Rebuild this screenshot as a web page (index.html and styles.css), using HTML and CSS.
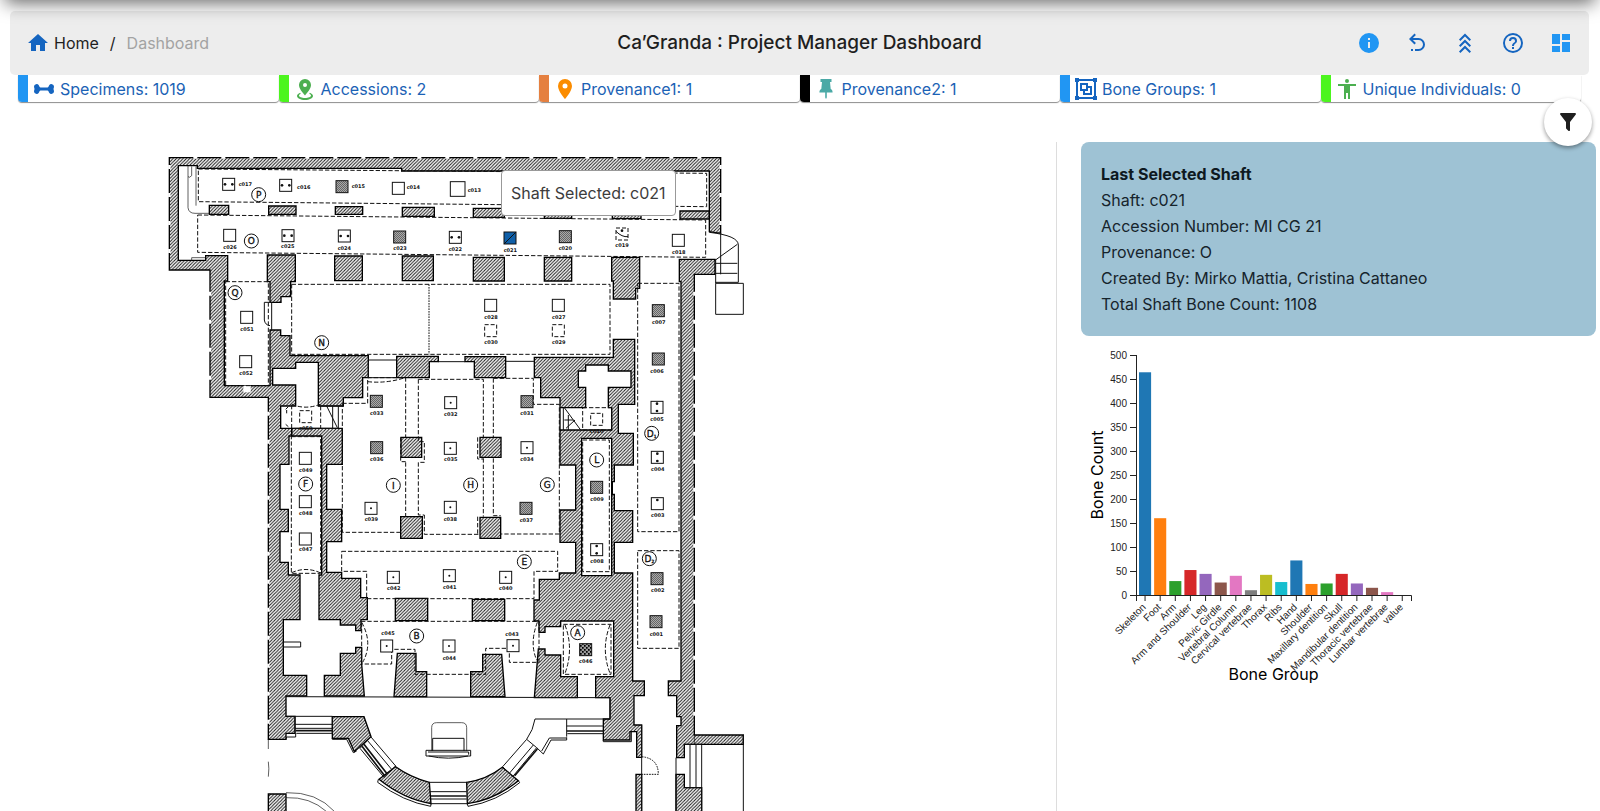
FILE: index.html
```html
<!DOCTYPE html>
<html lang="en">
<head>
<meta charset="utf-8">
<title>Ca’Granda : Project Manager Dashboard</title>
<link rel="stylesheet" href="styles.css">
</head>
<body>
<div class="appbar-edge"></div>
<header class="header">
  <nav class="crumbs" aria-label="Breadcrumb">
    <a class="crumb-home" href="#home">
      <svg class="icon" viewBox="0 0 24 24"><path d="M10,20V14H14V20H19V12H22L12,3L2,12H5V20H10Z"/></svg>
      <span>Home</span>
    </a>
    <span class="crumb-sep">/</span>
    <span class="crumb-current">Dashboard</span>
  </nav>
  <h1 class="title">Ca’Granda : Project Manager Dashboard</h1>
  <div class="actions">
    <button class="action light" type="button" aria-label="Information"><svg class="icon" viewBox="0 0 24 24"><path d="M13,9H11V7H13M13,17H11V11H13M12,2A10,10 0 0,0 2,12A10,10 0 0,0 12,22A10,10 0 0,0 22,12A10,10 0 0,0 12,2Z"/></svg></button>
    <button class="action" type="button" aria-label="Undo"><svg class="icon" viewBox="0 0 24 24"><path d="M13.5,7A6.5,6.5 0 0,1 20,13.5A6.5,6.5 0 0,1 13.5,20H10V18H13.5C16,18 18,16 18,13.5C18,11 16,9 13.5,9H7.83L10.91,12.09L9.5,13.5L4,8L9.5,2.5L10.92,3.91L7.83,7H13.5M6,18H8V20H6V18Z"/></svg></button>
    <button class="action" type="button" aria-label="Collapse"><svg class="icon line" viewBox="0 0 24 24"><path d="M6.700,9.300L12,4L17.300,9.300M6.700,15.300L12,10L17.300,15.300M6.700,21.300L12,16L17.300,21.300"/></svg></button>
    <button class="action" type="button" aria-label="Help"><svg class="icon" viewBox="0 0 24 24"><path d="M11,18H13V16H11V18M12,2A10,10 0 0,0 2,12A10,10 0 0,0 12,22A10,10 0 0,0 22,12A10,10 0 0,0 12,2M12,20C7.59,20 4,16.41 4,12C4,7.59 7.59,4 12,4C16.41,4 20,7.59 20,12C20,16.41 16.41,20 12,20M12,6A4,4 0 0,0 8,10H10A2,2 0 0,1 12,8A2,2 0 0,1 14,10C14,12 11,11.75 11,15H13C13,12.75 16,12.5 16,10A4,4 0 0,0 12,6Z"/></svg></button>
    <button class="action light" type="button" aria-label="Dashboard layout"><svg class="icon" viewBox="0 0 24 24"><path d="M13,3V9H21V3M13,21H21V11H13M3,21H11V15H3M3,13H11V3H3V13Z"/></svg></button>
  </div>
</header>

<section class="stats" aria-label="Project totals">
  <a class="stat blue" href="#specimens">
    <svg class="icon navy" viewBox="0 0 24 24"><path d="M2,9.500A2.600,2.600 0 0,1 6.800,8.300C7.300,9.200 7.700,10.400 8.500,10.400H15.500C16.300,10.400 16.700,9.200 17.200,8.300A2.600,2.600 0 0,1 22,9.500C22,10.800 21.500,11.200 21.500,12C21.500,12.800 22,13.200 22,14.500A2.600,2.600 0 0,1 17.200,15.700C16.700,14.800 16.300,13.600 15.500,13.600H8.500C7.700,13.600 7.300,14.800 6.800,15.700A2.600,2.600 0 0,1 2,14.500C2,13.200 2.500,12.800 2.500,12C2.500,11.200 2,10.800 2,9.500Z"/></svg>
    <span>Specimens: 1019</span>
  </a>
  <a class="stat green" href="#accessions">
    <svg class="icon leaf" viewBox="0 0 24 24"><path d="M12,2A6,6 0 0,1 18,8C18,11.500 14.500,15.500 12,18.500C9.500,15.500 6,11.500 6,8A6,6 0 0,1 12,2M12,6A2,2 0 0,0 10,8A2,2 0 0,0 12,10A2,2 0 0,0 14,8A2,2 0 0,0 12,6M20,19C20,21.200 16.400,23 12,23C7.600,23 4,21.200 4,19C4,17.700 5.200,16.600 7.100,15.800L7.700,16.700C6.700,17.200 6,17.800 6,18.500C6,19.900 8.700,21 12,21C15.300,21 18,19.900 18,18.500C18,17.800 17.300,17.200 16.300,16.700L16.900,15.800C18.800,16.600 20,17.700 20,19Z"/></svg>
    <span>Accessions: 2</span>
  </a>
  <a class="stat rust" href="#provenance1">
    <svg class="icon amber" viewBox="0 0 24 24"><path d="M12,11.500A2.500,2.500 0 0,1 9.500,9A2.500,2.500 0 0,1 12,6.500A2.500,2.500 0 0,1 14.500,9A2.500,2.500 0 0,1 12,11.500M12,2A7,7 0 0,0 5,9C5,14.250 12,22 12,22C12,22 19,14.250 19,9A7,7 0 0,0 12,2Z"/></svg>
    <span>Provenance1: 1</span>
  </a>
  <a class="stat black" href="#provenance2">
    <svg class="icon teal" viewBox="0 0 24 24"><path d="M16,5L16.700,12C18,12.700 18.600,13.700 18.600,15.500H12.800V20.500L12,22L11.200,20.500V15.500H5.400C5.400,13.700 6,12.700 7.300,12L8,5H6.500V2H17.500V5Z"/></svg>
    <span>Provenance2: 1</span>
  </a>
  <a class="stat blue" href="#groups">
    <svg class="icon navy" viewBox="0 0 24 24"><path fill-rule="evenodd" d="M1,1H5V2H19V1H23V5H22V19H23V23H19V22H5V23H1V19H2V5H1ZM5,4V5H4V19H5V20H19V19H20V5H19V4ZM6,6H14V9H18V18H9V14H6ZM8,8V12H12V8ZM14,11V14H11V16H16V11Z"/></svg>
    <span>Bone Groups: 1</span>
  </a>
  <a class="stat green" href="#individuals">
    <svg class="icon leaf" viewBox="0 0 24 24"><path d="M12,2A2,2 0 0,1 14,4A2,2 0 0,1 12,6A2,2 0 0,1 10,4A2,2 0 0,1 12,2M21,7V9H15V22H13V16H11V22H9V9H3V7Z"/></svg>
    <span>Unique Individuals: 0</span>
  </a>
</section>

<button class="fab" type="button" aria-label="Filter"><svg class="icon" viewBox="0 0 24 24"><path d="M14,12V19.880C14.040,20.180 13.940,20.500 13.710,20.710C13.320,21.100 12.690,21.100 12.300,20.710L10.290,18.700C10.060,18.470 9.960,18.160 10,17.870V12H9.970L4.210,4.620C3.870,4.190 3.950,3.560 4.380,3.220C4.570,3.080 4.780,3 5,3H19C19.220,3 19.430,3.080 19.620,3.220C20.050,3.560 20.130,4.190 19.790,4.620L14.030,12H14Z"/></svg></button>

<main class="content">
  <section class="map" aria-label="Crypt floor plan">
    <div class="plan-wrap">
    <svg class="plan" viewBox="0 0 1800 1998">
      <defs>
        <pattern id="hatch" width="10" height="10" patternUnits="userSpaceOnUse"><path class="hatch-line" d="M-2,2L2,-2M-1,11L11,-1M8,12L12,8"/></pattern>
        <pattern id="mesh" width="6" height="6" patternUnits="userSpaceOnUse"><rect class="mesh-base" width="6" height="6"/><path class="mesh-line" d="M0,6L6,0"/></pattern>
        <pattern id="checker" width="12" height="12" patternUnits="userSpaceOnUse"><rect class="check-base" width="12" height="12"/><path class="check-dot" d="M0,0H5V5H0ZM6,6H11V11H6Z"/></pattern>
      </defs>

      <g class="wall">
        <path d="M28,38H1682V265L1648,260V78H725V70H112V62H55V346H137V332H203V408H193V722H330V555H362V572H390V632H625V698H608V758H550V783H475V652H407V670H338V720H407V783H362V850H395V873H387V958H360V1093H385V1160H360V1252H385V1290H420V1424H370V1591H440V1653H378V1714H405V1765H378V1783H325V757H150V375H28Z"/>
        <path d="M322,330H406V410H392V455H363V472H330V410H322Z"/>
        <path d="M395,850H547V958H500V1093H545V1190H500V1282H545V1300H602V1358H622V1424H603V1457H587V1440H541V1424H477V1290H485V873H395Z"/>
        <path d="M541,1525V1591H493V1653H613L605,1557V1507H587V1525Z"/>
        <path d="M148,181H206V208H148ZM326,183H408V208H326ZM526,185H608V208H526ZM727,187H823V214H727ZM940,190H1033V217H940ZM1153,192H1235V220H1153ZM1357,194H1443V221H1357ZM1560,198H1648V222H1560Z"/>
        <path d="M524,333H607V407H524ZM727,333H820V407H727ZM940,337H1033V408H940ZM1153,337H1235V408H1153Z"/>
        <path d="M1355,337H1439V430H1427V462H1360V408H1355Z"/>
        <path d="M1558,343H1665V388H1603V1770H1750V1798H1573V1838H1550V1742H1563V1715H1550V1652H1525V1608H1563V410H1558Z"/>
        <path d="M1548,1888H1573V1928H1625V2010H1548Z"/>
        <path d="M710,634H835V650H808V698H710ZM915,635H1037V698H943V650H915Z"/>
        <path fill-rule="evenodd" d="M1123,637H1360V583H1424V778H1375V865H1420V960H1363V1010H1357V1048H1363V1097H1418V1192H1363V1284H1418V1608H1453V1652H1422V1740H1445V1837H1430V1760H1410V1785H1330V1722H1350V1658H1307V1595H1361V1428H1202V1445H1155V1462H1137V1428H1122V1365H1138V1303H1198V1284H1247V1192H1200V1095H1247V960H1200V758H1142V698H1123ZM1265,880V1292H1355V880ZM1277,660H1345V678H1413V727H1345V788H1355V855H1200V788H1277V727H1255V678H1277Z"/>
        <path d="M1202,1595V1530H1155V1512H1135L1123,1658H1252V1595Z"/>
        <path d="M723,877H785V937H723ZM960,877H1023V937H960ZM722,1115H787V1180H722ZM960,1117H1022V1180H960Z"/>
        <path d="M706,1360H803V1427H706ZM937,1363H1034V1427H937Z"/>
        <path d="M712,1525L702,1655H800V1580H768V1525ZM968,1528V1580H932V1655H1035L1025,1528Z"/>
        <path d="M517,1715H612L633,1775L583,1820L565,1780H517Z"/>
        <path d="M707,1865Q750,1896 808,1912L813,1976Q730,1962 657,1903ZM920,1912Q980,1904 1027,1867L1075,1907Q1004,1965 922,1976Z"/>
        <path d="M325,1947H378V2010H325ZM1428,1888H1445V2010H1428Z"/>
      </g>
      <g class="breaks">
        <path d="M100,38H1660M28,60V370M150,440V740M325,800V1760M1603,440V1760M1682,60V250"/>
      </g>

      <g class="outline">
        <path d="M378,1655L1350,1658M378,1714H517M1350,1658V1722H1125"/>
        <path d="M405,1714V1765M517,1714V1765M405,1738H517M405,1750H517M378,1783L380,1776H407V1765"/>
        <path class="bold" d="M407,1757H517M1220,1758H1332"/>
        <path d="M1220,1722V1775M1220,1743H1332M1222,1766H1332M409,1765H517M517,1780V1783H560L580,1823L590,1818"/>
        <path d="M633,1776L707,1863L672,1897L600,1810ZM622,1786L694,1872"/>
        <path class="bold" d="M612,1798L680,1885M606,1804L674,1892"/>
        <path d="M1125,1722Q1120,1755 1100,1783L1130,1808L1058,1895L1028,1865L1100,1783M1120,1800L1048,1885"/>
        <path class="bold" d="M1132,1812L1064,1892"/>
        <path d="M1130,1808L1150,1827L1173,1785H1220V1777M1145,1818L1168,1779H1220M1330,1785V1790H1414V1760"/>
        <path d="M808,1912H920M808,1940H920M812,1962H920M813,1976H922"/>
        <path class="bold" d="M812,1953H920"/>
        <path d="M655,1903L653,1912Q730,1970 812,1984L813,1976M922,1976L924,1984Q1010,1970 1079,1913L1075,1907"/>
        <path class="thin" d="M815,1818V1748Q815,1733 830,1733H905Q920,1733 920,1748V1818"/>
        <path d="M818,1818V1780H912V1818M798,1816H932V1833H798ZM804,1821H926V1829M806,1833Q865,1846 924,1833"/>
        <path class="thin" d="M378,1943Q470,1940 524,2000M378,1958Q450,1955 500,2000M325,1783V1812M325,1850Q328,1870 325,1895M1603,1770V1800"/>
        <path d="M370,1491H422V1506H370ZM1573,1798H1625V1928H1573M1590,1798V1928M1608,1798V1928M1625,1928V2000M1750,1770V2000M1548,1838V2000M1445,1740V2000"/>
        <path d="M1648,262Q1735,272 1735,300V412M1682,265V388M1665,346L1732,298M1665,355H1732M1665,385H1732M1667,343V415M1667,415H1750V508H1667ZM1667,412H1735"/>
        <path d="M625,645H710M835,650H915M1037,649H1123M625,650V698H710M335,472H313V525Q315,540 330,542M335,472V555"/>
        <path class="thin" d="M84,62V188Q86,205 105,205H148M108,64V182M95,64V92Q88,100 84,95M95,346V338H137"/>
        <path d="M500,783L532,848M518,783V850M535,783V850H400M475,783H550M1213,788L1262,855M1210,788V855M1225,810V855M1213,825H1240M1218,850L1245,825"/>
        <path d="M377,793L385,785M380,795V805M377,838L385,845"/>
        <rect class="blank" x="250" y="722" width="22" height="20"/>
      </g>

      <g class="dash">
        <path d="M115,72L1640,85V185L115,170ZM113,210L1637,225V337L113,322Z"/>
        <path d="M395,418H1350V628H395ZM197,410H325V722H197V410"/>
        <path class="dots" d="M807,418V628"/>
        <path d="M1433,415H1557V1160H1433ZM1433,1217H1557V1510H1433Z"/>
        <path d="M547,775H623V698H737V877M737,952V1115M722,1162H547V775M623,710Q680,716 735,698"/>
        <path d="M775,703H970V877M970,940V1115M955,1168H793V1110M775,703V890H793V952H775V1110H793M722,877V950H737M953,877V942H970M953,1115V1168"/>
        <path d="M1000,700H1120V778H1198V1167H1022M1000,700V877M1000,940V1112H1022"/>
        <path d="M545,1219H1193V1279H1122V1361H620V1279H545Z"/>
        <path d="M603,1429H1137V1552H1048V1510H977V1588H765V1513H695V1557H605V1429M605,1432Q640,1495 608,1552M1132,1432Q1108,1495 1130,1545"/>
        <path d="M394,875H482V1285H394ZM395,780V850M482,783V850M395,778Q437,795 480,778M395,1283Q437,1264 480,1283"/>
        <path d="M1268,885H1348V1280H1268ZM1268,788H1355V855H1268ZM1210,1438H1353V1588H1210Z"/>
        <path d="M1215,1440Q1242,1512 1215,1585M1350,1440Q1322,1512 1350,1585"/>
        <path class="dots" d="M1445,1835Q1495,1840 1495,1888H1445"/>
      </g>
      <g id="shafts"></g>
      <g id="zones"></g>
    </svg>
    <div class="tooltip" role="tooltip">Shaft Selected: c021</div>
    </div>
  </section>

  <aside class="side">
    <section class="shaft-card">
      <h2 class="shaft-title">Last Selected Shaft</h2>
      <p>Shaft: c021</p>
      <p>Accession Number: MI CG 21</p>
      <p>Provenance: O</p>
      <p>Created By: Mirko Mattia, Cristina Cattaneo</p>
      <p>Total Shaft Bone Count: 1108</p>
    </section>
    <svg class="chart" id="chart" viewBox="0 0 340 360" role="img" aria-label="Bone count by bone group"></svg>
  </aside>
</main>
<script src="script.js"></script>
</body>
</html>
```
FILE: styles.css
```css
* { box-sizing: border-box; }

body {
  margin: 0;
  background: #fff;
  color: #1f1f1f;
  font-family: Inter, "Liberation Sans", sans-serif;
  font-size: 16px;
  line-height: 24px;
}

h1, h2, p { margin: 0; }
a { color: inherit; text-decoration: none; }
button { padding: 0; border: 0; background: none; cursor: pointer; }

.icon { display: block; width: 24px; height: 24px; fill: currentColor; flex: none; }
.icon.line { fill: none; stroke: currentColor; stroke-width: 2; }

.appbar-edge {
  position: fixed;
  top: -60px;
  left: 0;
  right: 0;
  height: 60px;
  z-index: 5;
  box-shadow: 0 8px 18px -5px rgba(0, 0, 0, 0.6);
  pointer-events: none;
}

.header {
  display: grid;
  grid-template-columns: 1fr auto 1fr;
  align-items: center;
  height: 64px;
  margin: 11px 11px 0 10px;
  padding: 0 16px;
  border-radius: 5px;
  background: #ededed;
}

.crumbs { display: flex; align-items: center; }
.crumb-home { display: flex; align-items: center; gap: 4px; }
.crumb-home .icon { color: #1565c0; }
.crumb-sep { padding: 0 11px; }
.crumb-current { color: #a3a3a3; }
.title { font-size: 19px; font-weight: 500; }
.actions { display: flex; justify-content: flex-end; gap: 24px; }
.action { color: #1565c0; }
.action.light { color: #2196f3; }

.stats {
  display: grid;
  grid-template-columns: repeat(6, 1fr);
  padding: 0 19px 0 18px;
}

.stat {
  display: flex;
  align-items: center;
  gap: 4px;
  height: 27px;
  padding-left: 4px;
  border-left: 10px solid;
  border-radius: 0 0 4px 4px;
  box-shadow: 0 1px 1px rgba(0, 0, 0, 0.45);
}

.stat span { color: #1b62b5; }
.stat.blue { border-left-color: #2196f3; }
.stat.green { border-left-color: #4cf51e; }
.stat.rust { border-left-color: #e58040; }
.stat.black { border-left-color: #000; }
.navy { color: #1565c0; }
.leaf { color: #4caf50; }
.amber { color: #fb8c00; }
.teal { color: #4aa9a6; }

.fab {
  position: absolute;
  top: 98px;
  right: 8px;
  z-index: 4;
  display: grid;
  place-items: center;
  width: 48px;
  height: 48px;
  border-radius: 50%;
  background: #fff;
  color: #1f1f1f;
  box-shadow: 0 2px 4px rgba(0, 0, 0, 0.4);
}

.content {
  display: grid;
  grid-template-columns: 66fr 34fr;
  padding-top: 40px;
}

.map { padding: 3px 0 0 160px; }
.plan-wrap { position: relative; max-width: 600px; }
.plan { display: block; width: 100%; }

.tooltip {
  position: absolute;
  top: 25px;
  left: 341px;
  padding: 10px 9px;
  border: 1px solid #999;
  border-radius: 4px;
  background: #fff;
  color: #3c3c3c;
  white-space: nowrap;
}

.hatch-line { stroke: #111; stroke-width: 3; fill: none; }
.mesh-base { fill: #aaa; }
.mesh-line { stroke: #444; stroke-width: 2; }
.check-base { fill: #999; }
.check-dot { fill: #000; }
.wall { fill: url(#hatch); stroke: #000; stroke-width: 4; }
.breaks { fill: none; stroke: #fff; stroke-width: 7; stroke-dasharray: 12 72; }
.outline { fill: none; stroke: #111; stroke-width: 3; }
.outline .bold { stroke-width: 5; }
.outline .thin { stroke-width: 2; }
.outline .blank { fill: #fff; stroke: none; }
.dash { fill: none; stroke: #111; stroke-width: 3; stroke-dasharray: 13 6; }
.dash .dots { stroke-dasharray: 5 3; }
.shaft { fill: #fff; stroke: #111; stroke-width: 3; }
.shaft.filled { fill: url(#mesh); }
.shaft.checker { fill: url(#checker); }
.shaft.selected { fill: #0f5fa8; }
.shaft.broken { stroke-dasharray: 12 6; }
.mark { fill: #111; }
.stroke-mark { stroke: #111; stroke-width: 3; fill: none; }
.shaft-label { font: 700 15px "DejaVu Sans", sans-serif; text-anchor: middle; fill: #111; }
.zone-ring { fill: #fff; stroke: #111; stroke-width: 3; }
.zone-label { font: 27px "DejaVu Sans", sans-serif; text-anchor: middle; fill: #111; stroke: #111; }
.zone-sub { font-size: 13px; }

.side {
  padding: 0 4px 0 24px;
  border-left: 1px solid #ddd;
}

.shaft-card {
  padding: 19px 20px;
  border-radius: 8px;
  background: #9ec2d4;
  color: #16242c;
  line-height: 26px;
}

.shaft-title { font-size: 16px; font-weight: 700; color: #0e191f; }

.chart { display: block; width: 100%; max-width: 340px; }
.axis { fill: none; stroke: #222; }
.tick-label { font: 10px "Liberation Sans", sans-serif; text-anchor: end; fill: #222; }
.axis-title { font: 16px Inter, sans-serif; text-anchor: middle; fill: #000; }
```
FILE: script.js
```js
const NS = 'http://www.w3.org/2000/svg';

function add(parent, tag, attrs, text) {
  const el = document.createElementNS(NS, tag);
  for (const key in attrs) el.setAttribute(key, attrs[key]);
  if (text !== undefined) el.textContent = text;
  parent.appendChild(el);
  return el;
}

// id, kind, centre x, centre y, label x, label y
const shafts = [
  ['c017', 'pair', 206, 118, 256, 117], ['c016', 'pair', 377, 121, 431, 128],
  ['c015', 'filled', 546, 125, 595, 123], ['c014', 'empty', 715, 130, 760, 127],
  ['c013', 'empty', 893, 132, 943, 136], ['c026', 'empty', 209, 271, 210, 307],
  ['c025', 'pair', 384, 272, 383, 305], ['c024', 'pair', 553, 273, 553, 309],
  ['c023', 'filled', 719, 276, 720, 311], ['c022', 'pair', 886, 277, 886, 313],
  ['c021', 'selected', 1050, 279, 1051, 315], ['c020', 'filled', 1216, 275, 1216, 311],
  ['c019', 'cracked', 1386, 267, 1386, 302], ['c018', 'empty', 1555, 286, 1556, 322],
  ['c051', 'empty', 260, 517, 261, 553], ['c052', 'empty', 257, 650, 258, 686],
  ['c028', 'empty', 992, 481, 993, 517], ['c027', 'empty', 1195, 481, 1196, 517],
  ['c030', 'broken', 992, 557, 993, 592], ['c029', 'broken', 1195, 557, 1196, 593],
  ['c007', 'filled', 1495, 497, 1496, 533], ['c006', 'filled', 1495, 642, 1491, 678],
  ['c033', 'filled', 649, 769, 650, 804], ['c032', 'dot', 872, 773, 872, 808],
  ['c036', 'filled', 650, 908, 650, 942], ['c035', 'dot', 871, 910, 872, 943],
  ['c049', 'empty', 436, 940, 437, 975], ['c048', 'empty', 436, 1070, 437, 1106],
  ['c047', 'empty', 436, 1182, 437, 1213], ['c050', 'broken', 437, 815, 437, 850],
  ['c039', 'dot', 633, 1090, 634, 1123], ['c038', 'dot', 871, 1087, 871, 1123],
  ['c042', 'dot', 700, 1297, 701, 1331], ['c041', 'dot', 868, 1292, 869, 1326],
  ['c040', 'dot', 1037, 1297, 1037, 1331], ['c031', 'filled', 1101, 770, 1101, 806],
  ['c034', 'dot', 1101, 908, 1101, 943], ['c037', 'filled', 1098, 1090, 1099, 1125],
  ['c005', 'stack', 1491, 787, 1491, 822], ['c004', 'stack', 1492, 937, 1493, 973],
  ['c003', 'top', 1492, 1076, 1493, 1111], ['c009', 'filled', 1310, 1027, 1311, 1063],
  ['c008', 'stack', 1310, 1214, 1311, 1250], ['c010', 'broken', 1310, 823, 1310, 860],
  ['c002', 'filled', 1491, 1301, 1493, 1337], ['c001', 'filled', 1488, 1430, 1489, 1468],
  ['c046', 'checker', 1277, 1514, 1277, 1548], ['c043', 'dot', 1059, 1502, 1056, 1467],
  ['c045', 'dot', 680, 1503, 684, 1466], ['c044', 'dot', 867, 1503, 868, 1539]
];

const marks = {
  pair: [[-11, 0], [11, 0]],
  stack: [[0, -11], [0, 11]],
  top: [[0, -11]],
  dot: [[0, 0]],
  cracked: [[0, -10]]
};

const shaftLayer = document.getElementById('shafts');
for (const [id, kind, x, y, lx, ly] of shafts) {
  const half = id === 'c013' ? 22 : 18;
  const look = kind === 'cracked' ? 'broken' : kind;
  add(shaftLayer, 'rect', { class: 'shaft ' + look, x: x - half, y: y - half, width: half * 2, height: half * 2 });
  for (const [dx, dy] of marks[kind] || []) {
    add(shaftLayer, 'circle', { class: 'mark', cx: x + dx, cy: y + dy, r: kind === 'dot' ? 3 : 4 });
  }
  if (kind === 'selected') add(shaftLayer, 'path', { class: 'stroke-mark', d: `M${x - 18},${y + 18}L${x + 18},${y - 18}` });
  if (kind === 'cracked') add(shaftLayer, 'path', { class: 'stroke-mark', d: `M${x - 18},${y - 8}Q${x},${y + 10} ${x + 18},${y + 8}` });
  add(shaftLayer, 'text', { class: 'shaft-label', x: lx, y: ly + 5 }, id);
}

const zones = [
  ['P', 296, 149], ['O', 274, 288], ['Q', 225, 443], ['N', 485, 593], ['F', 437, 1017],
  ['I', 700, 1021], ['H', 932, 1020], ['G', 1162, 1019], ['L', 1310, 945], ['D', 1475, 865, '1'],
  ['D', 1468, 1241, '2'], ['E', 1093, 1250], ['B', 770, 1473], ['A', 1253, 1463]
];

const zoneLayer = document.getElementById('zones');
for (const [name, x, y, sub] of zones) {
  add(zoneLayer, 'circle', { class: 'zone-ring', cx: x, cy: y, r: 21 });
  const label = add(zoneLayer, 'text', { class: 'zone-label', x, y: y + 10 }, name);
  if (sub) add(label, 'tspan', { class: 'zone-sub', dy: 4 }, sub);
}

const groups = [
  ['Skeleton', 464], ['Foot', 160], ['Arm', 29], ['Arm and Shoulder', 52], ['Leg', 44],
  ['Pelvic Girdle', 26], ['Vertebral Column', 40], ['Cervical vertebrae', 10], ['Thorax', 42],
  ['Ribs', 27], ['Hand', 72], ['Shoulder', 23], ['Maxillary dentition', 24], ['Skull', 44],
  ['Mandibular dentition', 24], ['Thoracic vertebrae', 15], ['Lumbar vertebrae', 6], ['value', 0]
];
const palette = ['#1f77b4', '#ff7f0e', '#2ca02c', '#d62728', '#9467bd', '#8c564b', '#e377c2', '#7f7f7f', '#bcbd22', '#17becf'];

const chart = document.getElementById('chart');
const axisLeft = 55, axisRight = 330, axisTop = 19, axisBase = 259;
const band = 12.1, step = 15.13;
const yOf = value => axisBase - value * (axisBase - axisTop) / 500;

groups.forEach(([name, value], i) => {
  const x = axisLeft + 3 + i * step;
  const mid = x + band / 2;
  add(chart, 'rect', { x, y: yOf(value), width: band, height: axisBase - yOf(value), fill: palette[i % 10] });
  add(chart, 'path', { class: 'axis', d: `M${mid},${axisBase}v6` });
  add(chart, 'text', { class: 'tick-label', transform: `translate(${mid},${axisBase}) rotate(-45)`, x: -8, y: 10 }, name);
});
for (let v = 0; v <= 500; v += 50) {
  const y = yOf(v) + 0.5;
  add(chart, 'path', { class: 'axis', d: `M${axisLeft - 6},${y}H${axisLeft}` });
  add(chart, 'text', { class: 'tick-label', x: axisLeft - 9, y: y + 3 }, v);
}
add(chart, 'path', { class: 'axis', d: `M${axisLeft + 0.5},${axisTop}V${axisBase + 6}M${axisLeft},${axisBase + 0.5}H${axisRight + 0.5}V${axisBase + 6}` });
add(chart, 'text', { class: 'axis-title', x: (axisLeft + axisRight) / 2, y: 344 }, 'Bone Group');
add(chart, 'text', { class: 'axis-title', transform: 'translate(22,139) rotate(-90)' }, 'Bone Count');
```
